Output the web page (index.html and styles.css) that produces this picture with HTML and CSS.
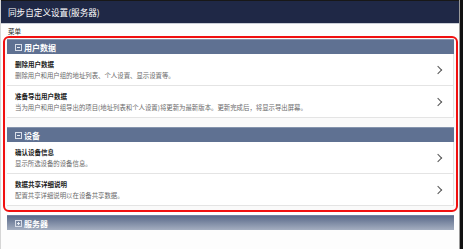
FILE: index.html
```html
<!DOCTYPE html>
<html lang="zh-CN">
<head>
  <meta charset="UTF-8">
  <title>同步自定义设置(服务器)</title>
  <link rel="stylesheet" href="styles.css">
</head>
<body>
  <div class="app">
    <div class="main">
      <div class="titlebar">同步自定义设置(服务器)</div>
      <div class="menu-label">菜单</div>

      <!-- highlighted block -->
      <div class="highlight">
        <div class="section-head"><span class="toggle minus"></span>用户数据</div>
        <div class="item-list">
          <div class="item">
            <div class="item-text">
              <div class="item-title">删除用户数据</div>
              <div class="item-desc">删除用户和用户组的地址列表、个人设置、显示设置等。</div>
            </div>
            <span class="chevron"></span>
          </div>
          <div class="item">
            <div class="item-text">
              <div class="item-title">准备导出用户数据</div>
              <div class="item-desc">当为用户和用户组导出的项目(地址列表和个人设置)将更新为最新版本。更新完成后，将显示导出屏幕。</div>
            </div>
            <span class="chevron"></span>
          </div>
        </div>

        <div class="section-head spaced"><span class="toggle minus"></span>设备</div>
        <div class="item-list">
          <div class="item">
            <div class="item-text">
              <div class="item-title">确认设备信息</div>
              <div class="item-desc">显示所选设备的设备信息。</div>
            </div>
            <span class="chevron"></span>
          </div>
          <div class="item">
            <div class="item-text">
              <div class="item-title">数据共享详细说明</div>
              <div class="item-desc">配置共享详细说明以在设备共享数据。</div>
            </div>
            <span class="chevron"></span>
          </div>
        </div>
      </div>

      <div class="section-head collapsed"><span class="toggle plus"></span>服务器</div>
    </div>
    <div class="edge"></div>
  </div>
</body>
</html>
```

FILE: styles.css
```css
body {
  margin: 0;
  width: 463px;
  height: 249px;
  overflow: hidden;
  background: #fdfdfd;
  font-family: "Noto Sans CJK SC", "Noto Sans", sans-serif;
}

.app {
  display: flex;
  height: 249px;
}

.main {
  flex: 1;
  display: flex;
  flex-direction: column;
  border-left: 1px solid #d6d6d6;
}

/* right window edge */
.edge {
  width: 3px;
  background: #111;
  border-left: 1px solid #9a9a9a;
}

.titlebar {
  height: 24px;
  box-sizing: border-box;
  line-height: 22px;
  padding-left: 7px;
  background: #1f2846;
  border-top: 1px solid #181818;
  border-bottom: 1px solid #c9cdd6;
  color: #fff;
  font-size: 8.6px;
}

.menu-label {
  padding: 3px 0 0 7px;
  font-size: 6.5px;
  line-height: 9px;
  color: #222;
}

/* red outline around the first two sections */
.highlight {
  margin: 0 1px 0 2px;
  padding: 1px 2px 4px 2px;
  border: 2px solid #f01010;
  border-radius: 6px;
  background: #fafafa;
}

.section-head {
  display: flex;
  align-items: center;
  height: 15px;
  padding-left: 8px;
  background: #5f7192;
  border-top: 1px solid #8594ad;
  box-sizing: border-box;
  color: #fff;
  font-size: 8px;
  font-weight: bold;
}

.section-head.spaced {
  margin-top: 9px;
}

.section-head.collapsed {
  margin: 3px 5px 0 6px;
  background: linear-gradient(#5a6a8a, #a4aec0);
  border-top: 1px solid #7080a0;
}

.toggle {
  position: relative;
  width: 5px;
  height: 5px;
  margin-right: 2px;
  border: 1px solid #d8dde8;
}

.toggle::before {
  content: "";
  position: absolute;
  left: 1px;
  top: 2px;
  width: 3px;
  height: 1px;
  background: #e8ecf3;
}

.toggle.plus::after {
  content: "";
  position: absolute;
  left: 2px;
  top: 1px;
  width: 1px;
  height: 3px;
  background: #e8ecf3;
}

.item-list {
  background: #fff;
  border-right: 1px solid #e2e2e2;
}

.item {
  display: flex;
  align-items: center;
  padding: 6px 10px 5px 8px;
  border-bottom: 1px solid #e4e4e4;
}

.item-text {
  flex: 1;
}

.item-title {
  font-size: 6.5px;
  line-height: 9px;
  font-weight: bold;
  color: #1a1a1a;
}

.item-desc {
  margin-top: 2px;
  font-size: 6.4px;
  line-height: 9px;
  color: #6a6a6a;
}

.chevron {
  width: 5px;
  height: 5px;
  margin-right: 2px;
  border-top: 1px solid #555;
  border-right: 1px solid #555;
  transform: rotate(45deg);
}
```
